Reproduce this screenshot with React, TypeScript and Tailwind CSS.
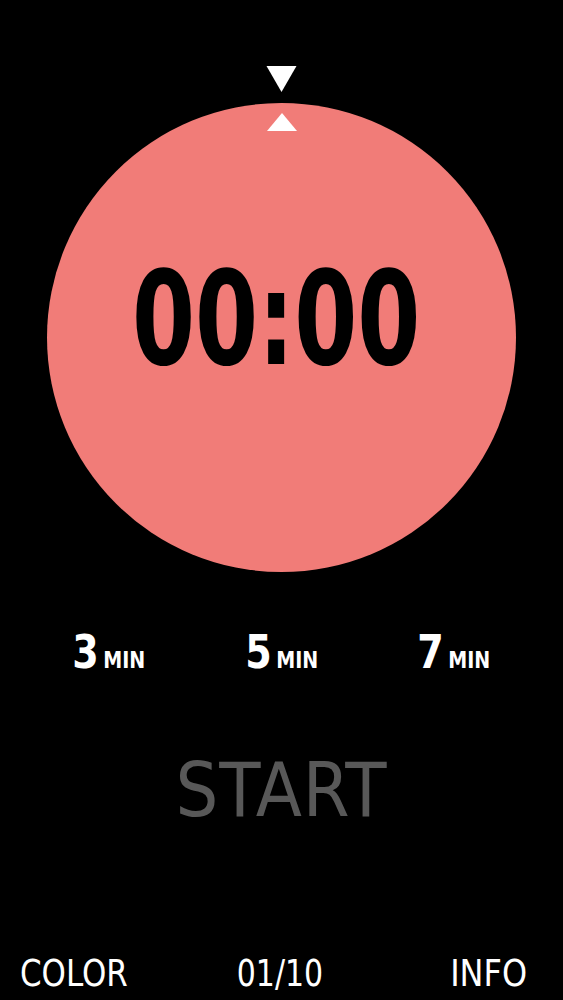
const condensed = { fontFamily: '"DejaVu Sans Condensed", "Liberation Sans", sans-serif' }

const presets = [3, 5, 7]

export default function App() {
  return (
    <div className="flex h-[1000px] w-full flex-col items-center overflow-hidden bg-black text-white" style={condensed}>
      <svg viewBox="0 0 30 26" className="mt-[66px] h-[26px] w-[31px]" aria-hidden="true">
        <polygon points="0,0 30,0 15,26" fill="#fff" />
      </svg>

      <div className="mt-[11px] flex h-[469px] w-[469px] shrink-0 flex-col items-center rounded-full bg-[#f17c78]">
        <svg viewBox="0 0 30 18" className="mt-[10px] h-[18px] w-[30px]" aria-hidden="true">
          <polygon points="15,0 30,18 0,18" fill="#fff" />
        </svg>
        <div className="-ml-[10px] mt-[123px] inline-block scale-x-[0.775] whitespace-nowrap text-[130px] font-bold leading-none text-black">
          00:00
        </div>
      </div>

      <div className="mt-[57px] grid w-full grid-cols-3 justify-items-center px-[23px]">
        {presets.map((m) => (
          <div key={m} className="flex scale-x-[0.92] items-baseline leading-none">
            <span className="text-[46px] font-bold">{m}</span>
            <span className="ml-[5px] text-[23px] font-bold">MIN</span>
          </div>
        ))}
      </div>

      <div className="mt-[78px] text-[75px] leading-none tracking-[1px] text-[#585858]">START</div>

      <div className="mt-[127px] grid w-full grid-cols-[1fr_auto_1fr] items-center pl-[20px] pr-[36px] text-[37px] leading-none">
        <span className="inline-block origin-left scale-x-[0.93] justify-self-start">COLOR</span>
        <span className="ml-[13px] inline-block scale-x-[0.9] justify-self-center">01/10</span>
        <span className="inline-block origin-right scale-x-[0.96] justify-self-end">INFO</span>
      </div>
    </div>
  )
}
